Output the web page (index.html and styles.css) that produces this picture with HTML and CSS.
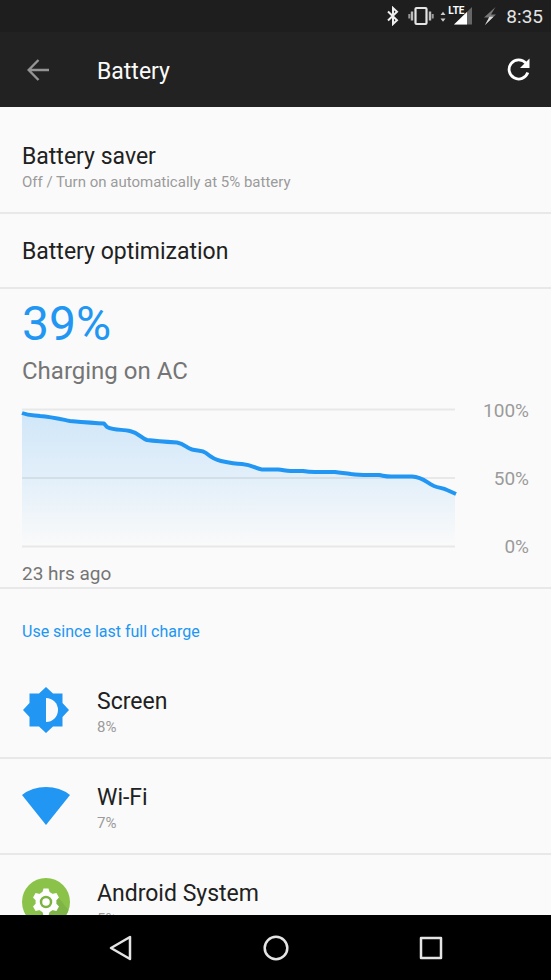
FILE: index.html
```html
<!DOCTYPE html>
<html lang="en">

<head>
    <meta charset="UTF-8">
    <meta name="viewport" content="width=device-width, initial-scale=1.0">
    <title>Battery</title>
    <link rel="stylesheet" href="styles.css">
</head>

<body>
    <!-- Status bar -->
    <div class="status-bar">
        <svg class="bluetooth" width="14" height="20" viewBox="0 0 14 20" fill="none" stroke="#eee" stroke-width="2">
            <path d="M2 5.500L11 14.200L7 18V2L11 5.800L2 14.500" />
        </svg>
        <svg class="vibrate" width="26" height="20" viewBox="0 0 26 20">
            <rect x="7.500" y="2" width="11" height="16" rx="1" fill="none" stroke="#e4e4e4" stroke-width="2.200" />
            <path d="M4 5.500v9M22 5.500v9" stroke="#bbb" stroke-width="2.400" />
            <path d="M1.300 8v4.500M24.700 8v4.500" stroke="#999" stroke-width="2" />
        </svg>
        <div class="signal">
            <svg width="34" height="20" viewBox="0 0 34 20">
                <path d="M0.500 9L3 5.800L5.500 9zM0.500 12.500L3 15.700L5.500 12.500z" fill="#ccc" />
                <path d="M14 18.500L32 1V18.500z" fill="#666" />
                <path d="M14 18.500L27 6V18.500z" fill="#fff" />
            </svg>
            <span class="lte">LTE</span>
        </div>
        <svg class="bolt" width="12" height="20" viewBox="0 0 12 20">
            <path d="M11.500 1L0 11.500H5L1 19L12 8.500H7z" fill="#777" />
            <path d="M1 10.800H5.500L1 19L9.500 10.800z" fill="#ddd" />
        </svg>
        <span class="clock">8:35</span>
    </div>

    <!-- App bar -->
    <header class="app-bar">
        <button class="icon-button" type="button" aria-label="Back">
            <svg width="22" height="22" viewBox="0 0 22 22" fill="none" stroke="#949494" stroke-width="2.400">
                <path d="M11.500 1L1.700 11L11.500 21M2 11H22" />
            </svg>
        </button>
        <h1>Battery</h1>
        <button class="icon-button" type="button" aria-label="Refresh">
            <svg width="24" height="24" viewBox="0 0 24 24">
                <path d="M19 5.200A9.600 9.600 0 1 0 20.800 14.500" fill="none" stroke="#fff" stroke-width="2.800" />
                <path d="M22.500 0.500V10H13z" fill="#fff" />
            </svg>
        </button>
    </header>

    <main>
        <a class="setting saver" href="#saver">
            <span class="title">Battery saver</span>
            <span class="summary">Off / Turn on automatically at 5% battery</span>
        </a>
        <a class="setting optimization" href="#optimization">
            <span class="title">Battery optimization</span>
        </a>

        <!-- Battery level and history graph -->
        <section class="usage">
            <div class="level">39%</div>
            <div class="state">Charging on AC</div>
            <div class="chart">
                <svg viewBox="0 0 433 140" preserveAspectRatio="none">
                    <defs>
                        <linearGradient id="fade" gradientUnits="userSpaceOnUse" x1="0" y1="0" x2="0" y2="138">
                            <stop offset="0" stop-color="#2196f3" stop-opacity=".2" />
                            <stop offset=".5" stop-color="#2196f3" stop-opacity=".11" />
                            <stop offset="1" stop-color="#2196f3" stop-opacity="0" />
                        </linearGradient>
                    </defs>
                    <path class="grid" d="M0 1.500H433M0 70H433M0 138.500H433" />
                    <path fill="url(#fade)" d="M0 5C8 8 13 7 18 8C30 9 38 11 48 13C60 14 72 15 82 15.500L85 19C93 23 101 21 108 23C117 25 119 30 125 32C133 33 147 34 155 34.500C163 36 164 40 170 41.500C176 43 180 42 184 45C190 50 194 52 199 53C208 55 214 56 220 56C231 57 234 61 240 61.500H256C262 62 263 63 269 63H281C287 64 288 64 293 64H313C320 65 324 65 329 66C336 67 341 67 347 67H357C363 68 364 68.500 369 68.500H390C401 69 405 75 412 78C417 80 421 80 425 82L433 85V138H0z" />
                    <path class="line" d="M0 5C8 8 13 7 18 8C30 9 38 11 48 13C60 14 72 15 82 15.500L85 19C93 23 101 21 108 23C117 25 119 30 125 32C133 33 147 34 155 34.500C163 36 164 40 170 41.500C176 43 180 42 184 45C190 50 194 52 199 53C208 55 214 56 220 56C231 57 234 61 240 61.500H256C262 62 263 63 269 63H281C287 64 288 64 293 64H313C320 65 324 65 329 66C336 67 341 67 347 67H357C363 68 364 68.500 369 68.500H390C401 69 405 75 412 78C417 80 421 80 425 82L434 86" />
                </svg>
                <div class="scale">
                    <span>100%</span>
                    <span>50%</span>
                    <span>0%</span>
                </div>
            </div>
            <div class="since">23 hrs ago</div>
        </section>

        <!-- Apps and hardware using the battery -->
        <h2>Use since last full charge</h2>
        <a class="consumer" href="#screen">
            <svg width="48" height="48" viewBox="0 0 48 48">
                <path fill="#2196f3" d="M24 1L31 7.500H40.500V17L47 24L40.500 31V40.500H31L24 47L17 40.500H7.500V31L1 24L7.500 17V7.500H17z" />
                <path fill="#fafafa" d="M24 12A12 12 0 0 1 24 36z" />
            </svg>
            <span class="text">
                <span class="title">Screen</span>
                <span class="summary">8%</span>
            </span>
        </a>
        <a class="consumer" href="#wifi">
            <svg width="48" height="48" viewBox="0 0 48 48">
                <path fill="#2196f3" d="M24 43L0 13Q10 5 24 5T48 13z" />
            </svg>
            <span class="text">
                <span class="title">Wi-Fi</span>
                <span class="summary">7%</span>
            </span>
        </a>
        <a class="consumer" href="#android">
            <svg width="48" height="48" viewBox="0 0 48 48">
                <circle cx="24" cy="24" r="24" fill="#8bc34a" />
                <path fill="#7fb446" d="M36 19L46.500 32A24 24 0 0 1 28 47.700L18 35z" />
                <g fill="#fff">
                    <circle cx="24" cy="24" r="10.500" />
                    <path id="tooth" d="M21.500 10.500H26.500L28.500 17H19.500z" />
                    <use href="#tooth" transform="rotate(60 24 24)" />
                    <use href="#tooth" transform="rotate(120 24 24)" />
                    <use href="#tooth" transform="rotate(180 24 24)" />
                    <use href="#tooth" transform="rotate(240 24 24)" />
                    <use href="#tooth" transform="rotate(300 24 24)" />
                </g>
                <circle cx="24" cy="24" r="5" fill="#fff" stroke="#7cb342" stroke-width="2.500" />
            </svg>
            <span class="text">
                <span class="title">Android System</span>
                <span class="summary">5%</span>
            </span>
        </a>
    </main>

    <!-- Navigation bar -->
    <nav>
        <button type="button" aria-label="Back">
            <svg width="26" height="26" viewBox="0 0 26 26"><path d="M22 2V24L3 13z" /></svg>
        </button>
        <button type="button" aria-label="Home">
            <svg width="26" height="26" viewBox="0 0 26 26"><circle cx="13" cy="13" r="11.300" /></svg>
        </button>
        <button type="button" aria-label="Recent apps">
            <svg width="26" height="26" viewBox="0 0 26 26"><rect x="3" y="3" width="20" height="20" /></svg>
        </button>
    </nav>
</body>

</html>
```
FILE: styles.css
```css
* {
    box-sizing: border-box;
}

body {
    margin: 0;
    height: 100vh;
    display: flex;
    flex-direction: column;
    overflow: hidden;
    background: #fafafa;
    color: #212121;
    font-family: Roboto, sans-serif;
}

a {
    color: inherit;
    text-decoration: none;
}

button {
    padding: 0;
    border: 0;
    background: none;
}

svg {
    display: block;
    flex: none;
}

/* Status bar */
.status-bar {
    height: 32px;
    flex: none;
    display: flex;
    align-items: center;
    justify-content: flex-end;
    padding-right: 8px;
    background: #1e1e1e;
    color: #e4e4e4;
}

.vibrate {
    margin-left: 8px;
}

.signal {
    position: relative;
    margin-left: 6px;
}

.lte {
    position: absolute;
    top: 0;
    left: 8px;
    font-size: 10px;
    line-height: 10px;
    font-weight: bold;
    color: #fff;
}

.bolt {
    margin-left: 10px;
}

.clock {
    margin-left: 10px;
    padding-top: 2px;
    font-size: 19px;
    line-height: 24px;
}

/* App bar */
.app-bar {
    height: 75px;
    flex: none;
    display: flex;
    align-items: center;
    padding: 0 20px 0 27px;
    background: #222;
    color: #fafafa;
}

.app-bar h1 {
    flex: 1;
    margin: 0 0 0 48px;
    padding-top: 4px;
    font-size: 23px;
    line-height: 28px;
    font-weight: normal;
}

/* Settings list */
main {
    flex: 1;
    min-height: 0;
    overflow: hidden;
}

.title,
.summary {
    display: block;
}

.title {
    font-size: 23px;
    line-height: 28px;
}

.summary {
    margin-top: 1px;
    font-size: 15px;
    line-height: 20px;
    color: #9b9b9b;
}

.setting {
    display: block;
    border-bottom: 2px solid #e8e8e8;
}

.saver {
    padding: 36px 22px 20px;
}

.optimization {
    padding: 24px 22px 21px;
}

/* Battery level and graph */
.usage {
    padding: 7px 22px 1px;
    border-bottom: 2px solid #e8e8e8;
}

.level {
    font-size: 48px;
    line-height: 56px;
    color: #2196f3;
}

.state {
    margin-top: 4px;
    font-size: 24px;
    line-height: 30px;
    color: #757575;
}

.chart {
    display: flex;
    margin-top: 13px;
}

.chart svg {
    flex: 1;
    min-width: 0;
    height: 140px;
    margin: 9px 0 11px;
    overflow: visible;
}

.grid {
    stroke: #e8e8e8;
    stroke-width: 2;
}

.line {
    fill: none;
    stroke: #2196f3;
    stroke-width: 4;
    stroke-linejoin: round;
}

.scale {
    width: 74px;
    display: flex;
    flex-direction: column;
    justify-content: space-between;
    text-align: right;
    font-size: 19px;
    line-height: 24px;
    color: #9b9b9b;
}

.since {
    margin-top: 3px;
    font-size: 19px;
    line-height: 24px;
    color: #757575;
}

/* Battery consumers */
h2 {
    margin: 0;
    padding: 31px 22px 19px;
    font-size: 16px;
    line-height: 24px;
    font-weight: normal;
    color: #2196f3;
}

.consumer {
    display: flex;
    align-items: center;
    padding: 0 22px;
    border-bottom: 2px solid #e8e8e8;
}

.consumer .text {
    padding: 25px 0 20px;
    margin-left: 27px;
}

/* Navigation bar */
nav {
    height: 65px;
    flex: none;
    display: flex;
    justify-content: center;
    background: #000;
}

nav button {
    width: 155px;
    display: flex;
    align-items: center;
    justify-content: center;
}

nav svg {
    fill: none;
    stroke: #e4e4e4;
    stroke-width: 2.5;
    stroke-linejoin: round;
}
```
